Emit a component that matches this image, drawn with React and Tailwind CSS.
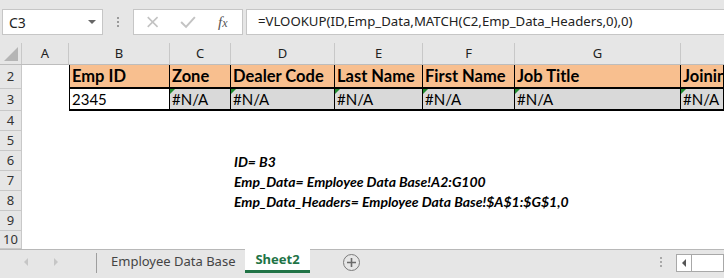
import React from "react";

const cols = [
  { l: "A", w: "w-[47px]" },
  { l: "B", w: "w-[101px]" },
  { l: "C", w: "w-[61px]" },
  { l: "D", w: "w-[104px]" },
  { l: "E", w: "w-[88px]" },
  { l: "F", w: "w-[92px]" },
  { l: "G", w: "w-[166px]" },
];

const headers = ["Emp ID", "Zone", "Dealer Code", "Last Name", "First Name", "Job Title", "Joining Date"];

const ui = { fontFamily: '"Noto Sans", "Open Sans", sans-serif' };
const cal = { fontFamily: 'Lato, "Liberation Sans", sans-serif' };

function RowHead({ n, h }) {
  return (
    <div
      className={`w-[22px] shrink-0 ${h} bg-[#e6e6e6] border-r border-b border-[#c8c8c8] flex items-center justify-center text-[13px] text-[#333]`}
      style={ui}
    >
      {n}
    </div>
  );
}

function Tri() {
  return (
    <div className="absolute left-0 top-0 w-0 h-0 border-t-[5px] border-t-[#1f8a2e] border-r-[5px] border-r-transparent" />
  );
}

export default function App() {
  return (
    <div className="w-[724px] h-[278px] overflow-hidden bg-white flex flex-col select-none">
      {/* Formula bar */}
      <div className="h-[43px] shrink-0 bg-[#e6e6e6] flex items-start pt-[9px] pl-[2px]">
        <div className="w-[101px] h-[26px] bg-white border border-[#c6c6c6] flex items-center justify-between pl-[6px] pr-[6px]">
          <span className="text-[14px] text-[#222]" style={ui}>C3</span>
          <div className="w-0 h-0 border-l-[4px] border-l-transparent border-r-[4px] border-r-transparent border-t-[4px] border-t-[#666]" />
        </div>
        <div className="w-[30px] h-[26px] flex flex-col items-center justify-center gap-[2px]">
          <div className="w-[2px] h-[2px] bg-[#9a9a9a]" />
          <div className="w-[2px] h-[2px] bg-[#9a9a9a]" />
          <div className="w-[2px] h-[2px] bg-[#9a9a9a]" />
        </div>
        <div className="w-[110px] h-[26px] bg-white border border-[#c6c6c6] flex items-center">
          <svg width="110" height="24" viewBox="0 0 110 24">
            <path d="M14 7 L24 17 M24 7 L14 17" stroke="#c3c3c3" strokeWidth="1.6" fill="none" />
            <path d="M48 12 L53 17 L62 7" stroke="#c3c3c3" strokeWidth="2" fill="none" />
          </svg>
          <span
            className="absolute ml-[84px] text-[15px] italic text-[#555]"
            style={{ fontFamily: '"Liberation Serif", serif' }}
          >
            f<span className="text-[12px]">x</span>
          </span>
        </div>
        <div className="ml-[3px] flex-1 h-[26px] bg-white border border-[#c6c6c6] border-r-0 flex items-center pl-[11px]">
          <span className="text-[13.2px] text-[#222] whitespace-nowrap" style={ui}>
            =VLOOKUP(ID,Emp_Data,MATCH(C2,Emp_Data_Headers,0),0)
          </span>
        </div>
      </div>

      {/* Column headers */}
      <div className="h-[22px] shrink-0 flex bg-[#e6e6e6] border-b border-[#bdbdbd]">
        <div className="w-[22px] shrink-0 relative border-r border-[#c8c8c8]">
          <div className="absolute right-[3px] bottom-[3px] w-0 h-0 border-l-[14px] border-l-transparent border-b-[14px] border-b-[#b5b5b5]" />
        </div>
        {cols.map((c) => (
          <div
            key={c.l}
            className={`${c.w} shrink-0 border-r border-[#c8c8c8] flex items-center justify-center text-[13px] text-[#222]`}
            style={ui}
          >
            {c.l}
          </div>
        ))}
        <div className="flex-1" />
      </div>

      {/* Row 2 */}
      <div className="h-[24px] shrink-0 flex">
        <RowHead n="2" h="h-[24px]" />
        <div className="w-[47px] shrink-0" />
        {headers.map((t, i) => (
          <div
            key={t}
            className={`${i < 6 ? cols[i + 1].w + " shrink-0" : "flex-1"} ${i === 0 ? "border-l" : ""} border-r border-b-2 border-black bg-[#f8bf8f] flex items-end pl-[2px] text-[16.5px] font-bold text-black whitespace-nowrap overflow-hidden leading-[22px]`}
            style={cal}
          >
            {t}
          </div>
        ))}
      </div>

      {/* Row 3 */}
      <div className="h-[22px] shrink-0 flex">
        <RowHead n="3" h="h-[22px]" />
        <div className="w-[47px] shrink-0" />
        {headers.map((t, i) => (
          <div
            key={t}
            className={`${i < 6 ? cols[i + 1].w + " shrink-0" : "flex-1"} ${i === 0 ? "border-l bg-white" : "bg-[#d9d9d9]"} relative border-r border-b-2 border-black flex items-end pl-[2px] text-[15px] text-black whitespace-nowrap overflow-hidden leading-[20px]`}
            style={cal}
          >
            {i > 0 && <Tri />}
            {i === 0 ? "2345" : "#N/A"}
          </div>
        ))}
      </div>

      {/* Rows 4-10 */}
      {[
        { n: "4", h: "h-[20px]" },
        { n: "5", h: "h-[20px]" },
        { n: "6", h: "h-[20px]", t: "ID= B3" },
        { n: "7", h: "h-[20px]", t: "Emp_Data= Employee Data Base!A2:G100" },
        { n: "8", h: "h-[20px]", t: "Emp_Data_Headers= Employee Data Base!$A$1:$G$1,0" },
        { n: "9", h: "h-[20px]" },
        { n: "10", h: "h-[18px]" },
      ].map((r) => (
        <div key={r.n} className={`${r.h} shrink-0 flex`}>
          <RowHead n={r.n} h={r.h} />
          <div className="w-[209px] shrink-0" />
          {r.t && (
            <div
              className="pl-[3px] text-[14px] font-bold italic text-black whitespace-nowrap flex items-center"
              style={cal}
            >
              {r.t}
            </div>
          )}
        </div>
      ))}

      {/* Tab bar */}
      <div className="h-[29px] shrink-0 bg-[#e6e6e6] border-t border-[#b8b8b8] flex items-start relative">
        <div className="w-[96px] shrink-0 h-[24px] flex items-center">
          <div className="ml-[24px] w-0 h-0 border-t-[4px] border-t-transparent border-b-[4px] border-b-transparent border-r-[4px] border-r-[#c6c6c6]" />
          <div className="ml-[26px] w-0 h-0 border-t-[4px] border-t-transparent border-b-[4px] border-b-transparent border-l-[4px] border-l-[#c6c6c6]" />
        </div>
        <div className="w-[1px] shrink-0 h-[20px] mt-[3px] bg-[#9e9e9e]" />
        <div className="w-[148px] shrink-0 h-[24px] flex items-center pl-[14px] text-[13px] text-[#444] whitespace-nowrap" style={ui}>
          Employee Data Base
        </div>
        <div className="-mt-[1px] w-[65px] shrink-0 h-[24px] bg-white border-b-[3px] border-[#217346] flex items-center justify-center text-[13px] font-bold text-[#217346]" style={ui}>
          Sheet2
        </div>
        <div className="ml-[33px] h-[24px] flex items-center">
          <div className="w-[17px] h-[17px] rounded-full border border-[#7a7a7a] flex items-center justify-center">
            <svg width="11" height="11" viewBox="0 0 11 11">
              <path d="M5.5 1 V10 M1 5.5 H10" stroke="#6a6a6a" strokeWidth="1.6" />
            </svg>
          </div>
        </div>
        <div className="flex-1" />
        <div className="h-[24px] flex flex-col items-center justify-center gap-[2px] mr-[14px]">
          <div className="w-[2px] h-[2px] bg-[#a8a8a8]" />
          <div className="w-[2px] h-[2px] bg-[#a8a8a8]" />
          <div className="w-[2px] h-[2px] bg-[#a8a8a8]" />
        </div>
        <div className="mt-[4px] w-[16px] h-[18px] bg-white border border-[#a8a8a8] flex items-center justify-center">
          <div className="w-0 h-0 border-t-[4px] border-t-transparent border-b-[4px] border-b-transparent border-r-[4px] border-r-[#555]" />
        </div>
        <div className="mt-[4px] w-[32px] h-[18px] bg-white border border-l-0 border-[#a8a8a8]" />
      </div>
    </div>
  );
}
